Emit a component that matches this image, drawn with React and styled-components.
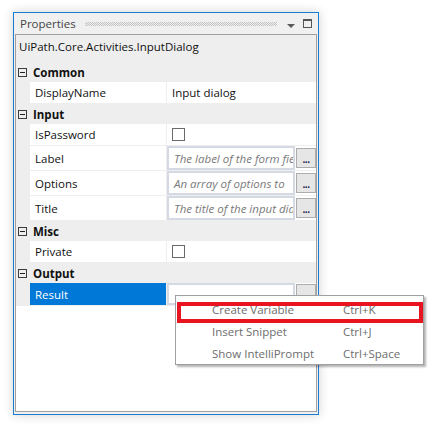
import React from "react";
import styled, { createGlobalStyle } from "styled-components";

const Global = createGlobalStyle`
  html, body { margin: 0; padding: 0; background: #ffffff; }
  body {
    font-family: "Open Sans", "Liberation Sans", sans-serif;
    font-size: 11.5px;
    color: #000;
  }
`;

const Page = styled.div`
  width: 435px;
  height: 430px;
  box-sizing: border-box;
  padding: 12px 0 0 13px;
`;

const Window = styled.div`
  position: relative;
  width: 306px;
  height: 403px;
  box-sizing: border-box;
  border: 1px solid #1a7bd0;
  background: #f0f0f0;
  box-shadow: 0 0 10px rgba(0, 0, 0, 0.18);
  display: flex;
  flex-direction: column;
`;

const TitleBar = styled.div`
  height: 21px;
  flex: none;
  display: flex;
  align-items: center;
  padding: 0 6px;
`;

const TitleText = styled.span`
  color: #444;
  line-height: 21px;
`;

const Grip = styled.div`
  flex: 1;
  height: 4px;
  margin: 1px 10px 0 9px;
  background: repeating-conic-gradient(#c2c2c2 0 25%, transparent 0 50%) 0 0 / 2px 2px;
`;

const DropArrow = styled.div`
  width: 0;
  height: 0;
  margin-top: 4px;
  border-left: 4px solid transparent;
  border-right: 4px solid transparent;
  border-top: 4px solid #5a5a5a;
`;

const MaxIcon = styled.div`
  width: 9px;
  height: 9px;
  box-sizing: border-box;
  margin-left: 8px;
  border: 1px solid #555;
  border-top-width: 2px;
`;

const Panel = styled.div`
  flex: 1;
  margin: 0 1px 2px;
  border: 1px solid #a0a0a0;
  background: #ffffff;
  display: flex;
  flex-direction: column;
`;

const ObjectName = styled.div`
  height: 27px;
  line-height: 24px;
  padding-left: 3px;
  background: #eeeeee;
  color: #111;
`;

const Grid = styled.div`
  background: #eeeeee;
  display: flex;
  flex-direction: column;
`;

const CategoryRow = styled.div`
  height: 20px;
  display: flex;
  align-items: center;
  padding-left: 2px;
  font-weight: 700;
  color: #111;
`;

const Expander = styled.span`
  position: relative;
  width: 9px;
  height: 9px;
  box-sizing: border-box;
  border: 1px solid #3c3c3c;
  margin-right: 6px;
  &::after {
    content: "";
    position: absolute;
    left: 1px;
    right: 1px;
    top: 3px;
    height: 1px;
    background: #222;
  }
`;

const PropRow = styled.div`
  height: ${(p) => p.$h}px;
  margin-bottom: 1px;
  display: grid;
  grid-template-columns: 14px 136px 1fr;
`;

const NameCell = styled.div`
  grid-column: 2;
  background: ${(p) => (p.$selected ? "#0078d7" : "#ffffff")};
  color: ${(p) => (p.$selected ? "#ffffff" : "#111")};
  padding-left: 5px;
  display: flex;
  align-items: center;
`;

const ValueCell = styled.div`
  grid-column: 3;
  margin-left: 1px;
  background: #ffffff;
  display: flex;
  align-items: center;
  padding-left: ${(p) => (p.$pad ? 5 : 0)}px;
  color: #111;
  overflow: hidden;
`;

const CheckBox = styled.span`
  width: 13px;
  height: 13px;
  box-sizing: border-box;
  border: 1px solid #6a6a6a;
  background: #fff;
`;

const TextBox = styled.div`
  width: 128px;
  height: 100%;
  box-sizing: border-box;
  border: 2px solid #d4d9e3;
  padding-left: 5px;
  display: flex;
  align-items: center;
  font-style: italic;
  color: #7a7a7a;
  white-space: nowrap;
  overflow: hidden;
`;

const EllipsisButton = styled.span`
  width: 20px;
  height: 20px;
  box-sizing: border-box;
  margin-left: 1px;
  border: 1px solid #adadad;
  background: #e6e6e6;
  color: #1a1a4a;
  font-size: 10px;
  font-weight: 700;
  line-height: 20px;
  text-align: center;
  letter-spacing: -0.5px;
`;

const Menu = styled.div`
  position: absolute;
  left: 161px;
  top: 282px;
  width: 249px;
  box-sizing: border-box;
  padding-top: 2px;
  border: 1px solid #a0a0a0;
  background: #ffffff;
  box-shadow: 2px 2px 2px rgba(0, 0, 0, 0.3);
`;

const MenuItem = styled.div`
  height: 22px;
  display: grid;
  grid-template-columns: 131px 1fr;
  align-items: center;
  padding-left: 36px;
  color: #6d6d6d;
`;

const Highlight = styled.div`
  position: absolute;
  left: 1px;
  top: 6px;
  width: 246px;
  height: 21px;
  box-sizing: border-box;
  border: 4px solid #e8141f;
  pointer-events: none;
`;

const Category = ({ title }) => (
  <CategoryRow>
    <Expander />
    {title}
  </CategoryRow>
);

const Row = ({ name, h = 21, selected, children, pad }) => (
  <PropRow $h={h}>
    <NameCell $selected={selected}>{name}</NameCell>
    <ValueCell $pad={pad}>{children}</ValueCell>
  </PropRow>
);

const Field = ({ text }) => (
  <>
    <TextBox>{text}</TextBox>
    <EllipsisButton>...</EllipsisButton>
  </>
);

export default function App() {
  return (
    <Page>
      <Global />
      <Window>
        <TitleBar>
          <TitleText>Properties</TitleText>
          <Grip />
          <DropArrow />
          <MaxIcon />
        </TitleBar>
        <Panel>
          <ObjectName>UiPath.Core.Activities.InputDialog</ObjectName>
          <Grid>
            <Category title="Common" />
            <Row name="DisplayName" pad>Input dialog</Row>
            <Category title="Input" />
            <Row name="IsPassword" pad>
              <CheckBox />
            </Row>
            <Row name="Label" h={24}>
              <Field text="The label of the form field" />
            </Row>
            <Row name="Options" h={24}>
              <Field text="An array of options to" />
            </Row>
            <Row name="Title" h={24}>
              <Field text="The title of the input dialog" />
            </Row>
            <Category title="Misc" />
            <Row name="Private" pad>
              <CheckBox />
            </Row>
            <Category title="Output" />
            <Row name="Result" h={22} selected>
              <Field text="" />
            </Row>
          </Grid>
        </Panel>
        <Menu>
          <MenuItem>
            <span>Create Variable</span>
            <span>Ctrl+K</span>
          </MenuItem>
          <MenuItem>
            <span>Insert Snippet</span>
            <span>Ctrl+J</span>
          </MenuItem>
          <MenuItem>
            <span>Show IntelliPrompt</span>
            <span>Ctrl+Space</span>
          </MenuItem>
          <Highlight />
        </Menu>
      </Window>
    </Page>
  );
}
